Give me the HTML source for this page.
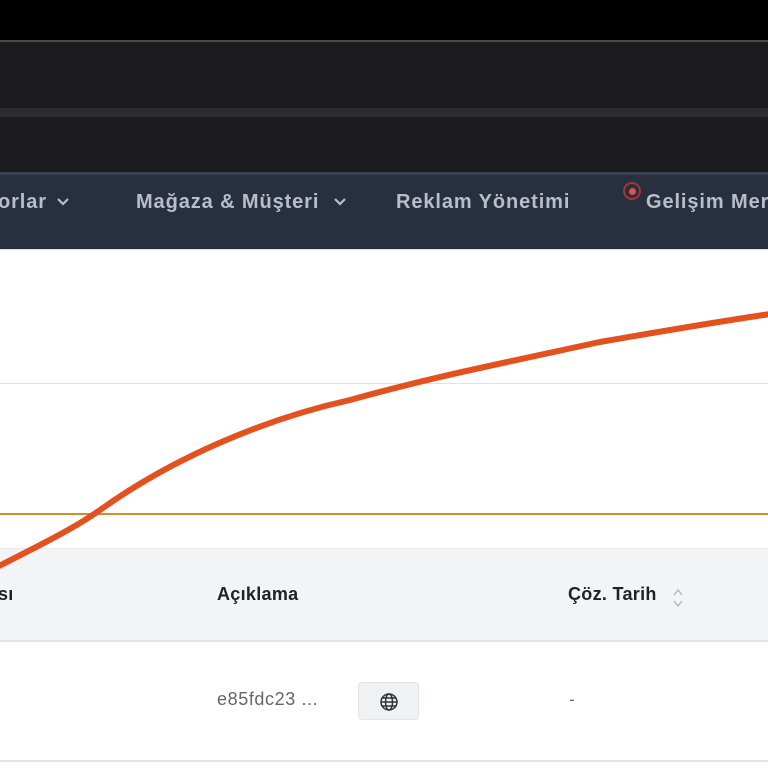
<!DOCTYPE html>
<html><head><meta charset="utf-8"><style>
body{margin:0;width:768px;height:768px;overflow:hidden;background:#fff;font-family:"Liberation Sans",sans-serif;position:relative}
div{position:absolute}
.nav{top:175px;height:74px;left:0;width:768px;background:#283040;color:#b8bec9;font-weight:bold;font-size:20px;letter-spacing:0.9px}
.nav span{position:absolute;top:16px;white-space:nowrap}
.nav svg{position:absolute;top:22px}
.th{font-weight:bold;font-size:18px;color:#222;top:584px;letter-spacing:0.3px}
</style></head><body>
<div style="top:0;left:0;width:768px;height:40px;background:#000"></div>
<div style="top:40px;left:0;width:768px;height:2px;background:#4a4a4d"></div>
<div style="top:42px;left:0;width:768px;height:68px;background:#1c1b1f"></div>
<div style="top:108px;left:0;width:768px;height:9px;background:#2c2c30"></div>
<div style="top:117px;left:0;width:768px;height:56px;background:#1c1b1f"></div>
<div style="top:172px;left:0;width:768px;height:3px;background:#3a4150"></div>
<div class="nav">
<span style="left:-2px">orlar</span>
<svg style="left:56px" width="14" height="10" viewBox="0 0 14 10"><path d="M2 2l5 5 5-5" fill="none" stroke="#b8bec9" stroke-width="2.2"/></svg>
<span style="left:136px">Mağaza &amp; Müşteri</span>
<svg style="left:333px" width="14" height="10" viewBox="0 0 14 10"><path d="M2 2l5 5 5-5" fill="none" stroke="#b8bec9" stroke-width="2.2"/></svg>
<span style="left:396px">Reklam Yönetimi</span>
<span style="left:646px">Gelişim Merkezi</span>
<div style="left:623px;top:7px;width:18px;height:18px;border-radius:50%;border:2px solid #a33;box-sizing:border-box"></div>
<div style="left:629px;top:13px;width:7px;height:7px;border-radius:50%;background:#f04b4b"></div>
</div>
<div style="top:249px;left:0;width:768px;height:1px;background:#ddd"></div>
<div style="top:383px;left:0;width:768px;height:1px;background:#e2e2e2"></div>
<div style="top:513px;left:0;width:768px;height:2px;background:#d98a2a"></div>
<div style="top:548px;left:0;width:768px;height:92px;background:#f3f4f6;border-top:1px solid #e5e7eb"></div>
<div style="top:640px;left:0;width:768px;height:2px;background:#e1e3e6"></div>
<div style="top:760px;left:0;width:768px;height:2px;background:#e1e3e6"></div>
<svg style="position:absolute;left:0;top:0" width="768" height="768"><path d="M-5 568 C40 545 75 528 100 510 C170 460 260 420 350 400 C430 378 470 370 600 342 C680 328 730 320 770 314" fill="none" stroke="#e5501f" stroke-width="6"/></svg>
<div class="th" style="left:-2px">sı</div>
<div class="th" style="left:217px">Açıklama</div>
<div class="th" style="left:568px">Çöz. Tarih</div>
<svg style="position:absolute;left:671px;top:586px" width="14" height="24" viewBox="0 0 14 24"><path d="M3 9l4-5 4 5M3 15l4 5 4-5" fill="none" stroke="#bbb" stroke-width="1.5"/></svg>
<div style="left:217px;top:689px;font-size:18px;color:#666;letter-spacing:0.6px">e85fdc23 ...</div>
<div style="left:358px;top:682px;width:61px;height:38px;background:#f0f1f3;border:1px solid #e2e4e8;border-radius:4px;box-sizing:border-box">
<svg style="position:absolute;left:20px;top:9px" width="20" height="20" viewBox="0 0 20 20" fill="none" stroke="#333" stroke-width="1.5"><circle cx="10" cy="10" r="8"/><ellipse cx="10" cy="10" rx="3.5" ry="8"/><path d="M2 10h16M3 6h14M3 14h14"/></svg></div>
<div style="left:569px;top:690px;font-size:17px;color:#666">-</div>
</body></html>
